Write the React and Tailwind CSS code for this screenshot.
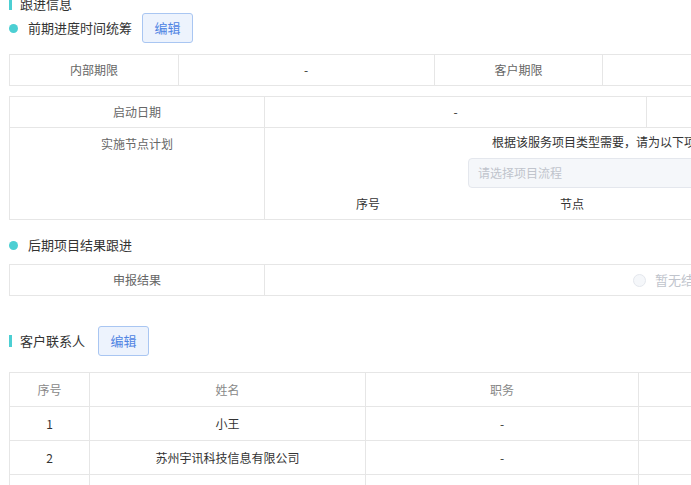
import React from 'react';

const font = { fontFamily: '"Microsoft YaHei", "Noto Sans CJK SC", "Liberation Sans", sans-serif' };

function SectionBar({ title, children, className = '' }) {
  return (
    <div className={`flex items-center ${className}`}>
      <span className="w-[3px] h-[12px] bg-[#4ccfd3]" />
      <span className="ml-[8px] text-[13px] text-[#333]">{title}</span>
      {children}
    </div>
  );
}

function SubTitle({ title, children, className = '' }) {
  return (
    <div className={`flex items-center ${className}`}>
      <span className="w-[9px] h-[9px] rounded-full bg-[#4ccfd3]" />
      <span className="ml-[10px] text-[13px] text-[#333]">{title}</span>
      {children}
    </div>
  );
}

function EditButton({ className = '' }) {
  return (
    <button
      type="button"
      className={`h-[30px] w-[51px] rounded-[3px] border border-[#a9c6f2] bg-[#edf3fd] text-[13px] text-[#4f84e3] ${className}`}
    >
      编辑
    </button>
  );
}

const cell = 'border-r border-b border-[#e6e6e6] flex items-center justify-center text-[12px]';

export default function App() {
  return (
    <div className="w-[691px] h-[485px] overflow-hidden bg-white" style={font}>
      <div className="w-[1100px] pl-[9px]">
        <SectionBar title="跟进信息" className="-mt-[6px] h-[19px]" />

        <SubTitle title="前期进度时间统筹" className="h-[30px]">
          <EditButton className="ml-[10px]" />
        </SubTitle>

        {/* 内部期限 / 客户期限 */}
        <div className="mt-[11px] flex border-t border-l border-[#e6e6e6] w-[850px]">
          <div className={`${cell} w-[169px] h-[31px] text-[#666]`}>内部期限</div>
          <div className={`${cell} w-[256px] h-[31px] text-[#333]`}>-</div>
          <div className={`${cell} w-[169px] h-[31px] text-[#666]`}>客户期限</div>
          <div className={`${cell} w-[256px] h-[31px] text-[#333]`}>-</div>
        </div>

        {/* 启动日期 / 实施节点计划 */}
        <div className="mt-[10px] border-t border-l border-[#e6e6e6] w-[1020px]">
          <div className="flex">
            <div className={`${cell} w-[255px] h-[31px] text-[#666]`}>启动日期</div>
            <div className={`${cell} w-[382px] h-[31px] text-[#333]`}>-</div>
            <div className={`${cell} flex-1 h-[31px] text-[#333]`}></div>
          </div>
          <div className="flex">
            <div className="w-[255px] h-[92px] border-r border-b border-[#e6e6e6] text-center text-[12px] text-[#666] pt-[7px]">
              实施节点计划
            </div>
            <div className="flex-1 h-[92px] border-r border-b border-[#e6e6e6] text-[12px] text-[#333]">
              <div className="h-[30px] flex items-center pl-[227px] pb-[2px]">
                根据该服务项目类型需要，请为以下项目选择对应的实施流程
              </div>
              <div className="ml-[203px] w-[300px] h-[30px] rounded-[4px] border border-[#e4e7ed] bg-[#f5f7fa] flex items-center pl-[9px] text-[#c0c4cc] text-[12px]">
                请选择项目流程
              </div>
              <div className="flex h-[31px] items-center">
                <div className="w-[206px] text-center">序号</div>
                <div className="w-[202px] text-center">节点</div>
              </div>
            </div>
          </div>
        </div>

        <SubTitle title="后期项目结果跟进" className="mt-[11px] h-[28px]" />

        <div className="mt-[5px] flex border-t border-l border-[#e6e6e6] w-[1020px]">
          <div className={`${cell} w-[255px] h-[31px] text-[#666]`}>申报结果</div>
          <div className="flex-1 h-[31px] border-r border-b border-[#e6e6e6] flex items-center pl-[368px]">
            <span className="w-[13px] h-[13px] rounded-full border border-[#e4e7ed] bg-[#f5f7fa]" />
            <span className="ml-[9px] text-[13px] text-[#c0c4cc]">暂无结果</span>
          </div>
        </div>

        <SectionBar title="客户联系人" className="mt-[30px] h-[30px]">
          <EditButton className="ml-[13px]" />
        </SectionBar>

        <div className="mt-[16px] border-t border-l border-[#e6e6e6] w-[900px]">
          <div className="flex">
            <div className={`${cell} w-[80px] h-[34px] text-[#888]`}>序号</div>
            <div className={`${cell} w-[276px] h-[34px] text-[#888]`}>姓名</div>
            <div className={`${cell} w-[273px] h-[34px] text-[#888]`}>职务</div>
            <div className={`${cell} flex-1 h-[34px] text-[#888]`}>联系方式</div>
          </div>
          {[
            ['1', '小王', '-', '-'],
            ['2', '苏州宇讯科技信息有限公司', '-', '-'],
            ['3', '-', '-', '-'],
          ].map((r) => (
            <div key={r[0]} className="flex">
              <div className={`${cell} w-[80px] h-[34px] text-[#333]`}>{r[0]}</div>
              <div className={`${cell} w-[276px] h-[34px] text-[#333]`}>{r[1]}</div>
              <div className={`${cell} w-[273px] h-[34px] text-[#333]`}>{r[2]}</div>
              <div className={`${cell} flex-1 h-[34px] text-[#333]`}>{r[3]}</div>
            </div>
          ))}
        </div>
      </div>
    </div>
  );
}
